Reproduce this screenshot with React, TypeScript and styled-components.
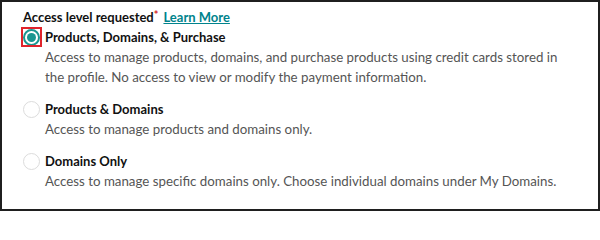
import React, { useState } from 'react';
import styled, { createGlobalStyle } from 'styled-components';

const GlobalStyle = createGlobalStyle`
  html, body {
    margin: 0;
    padding: 0;
    background: #ffffff;
  }
  body {
    font-family: Lato, "Liberation Sans", Arial, sans-serif;
  }
`;

const Frame = styled.div`
  box-sizing: border-box;
  width: 600px;
  height: 211px;
  border: 2px solid #1f1f1f;
  padding: 5px 0 0 19px;
  color: #111111;
`;

const Legend = styled.div`
  font-size: 13px;
  font-weight: 700;
  line-height: 20px;
  height: 20px;
  padding-left: 2px;
`;

const Required = styled.span`
  color: #d62828;
  position: relative;
  top: -3px;
  font-size: 11px;
`;

const LearnMore = styled.a`
  color: #00838c;
  text-decoration: underline;
  margin-left: 5px;
  cursor: pointer;
`;

const OptionList = styled.div`
  display: flex;
  flex-direction: column;
  gap: 12px;
`;

const Option = styled.label`
  display: grid;
  grid-template-columns: 22px 1fr;
  column-gap: 2px;
  cursor: pointer;
`;

const RadioBox = styled.span<{ $focused: boolean }>`
  box-sizing: border-box;
  width: 21px;
  height: 20px;
  display: flex;
  align-items: center;
  justify-content: center;
  outline: ${(p) => (p.$focused ? '2px solid #e0242b' : 'none')};
  outline-offset: -2px;
`;

const Circle = styled.span<{ $checked: boolean }>`
  box-sizing: border-box;
  width: 17px;
  height: 17px;
  border-radius: 50%;
  border: ${(p) => (p.$checked ? '2px solid #1a9690' : '1.5px solid #dcdcdc')};
  display: flex;
  align-items: center;
  justify-content: center;
  background: #fff;

  &::after {
    content: '';
    display: ${(p) => (p.$checked ? 'block' : 'none')};
    width: 9px;
    height: 9px;
    border-radius: 50%;
    background: #1a9690;
  }
`;

const Title = styled.div`
  font-size: 13px;
  font-weight: 700;
  line-height: 20px;
`;

const Description = styled.div`
  grid-column: 2;
  font-size: 13.3px;
  line-height: 20px;
  color: #555555;
  max-width: 525px;
`;

const options = [
  {
    id: 'all',
    title: 'Products, Domains, & Purchase',
    text: 'Access to manage products, domains, and purchase products using credit cards stored in the profile. No access to view or modify the payment information.',
  },
  {
    id: 'products',
    title: 'Products & Domains',
    text: 'Access to manage products and domains only.',
  },
  {
    id: 'domains',
    title: 'Domains Only',
    text: 'Access to manage specific domains only. Choose individual domains under My Domains.',
  },
];

export default function App() {
  const [value, setValue] = useState('all');

  return (
    <>
      <GlobalStyle />
      <Frame>
        <Legend>
          Access level requested<Required>*</Required>
          <LearnMore>Learn More</LearnMore>
        </Legend>
        <OptionList>
          {options.map((o) => (
            <Option key={o.id} onClick={() => setValue(o.id)}>
              <RadioBox $focused={value === o.id}>
                <Circle $checked={value === o.id} />
              </RadioBox>
              <Title>{o.title}</Title>
              <Description>{o.text}</Description>
            </Option>
          ))}
        </OptionList>
      </Frame>
    </>
  );
}
